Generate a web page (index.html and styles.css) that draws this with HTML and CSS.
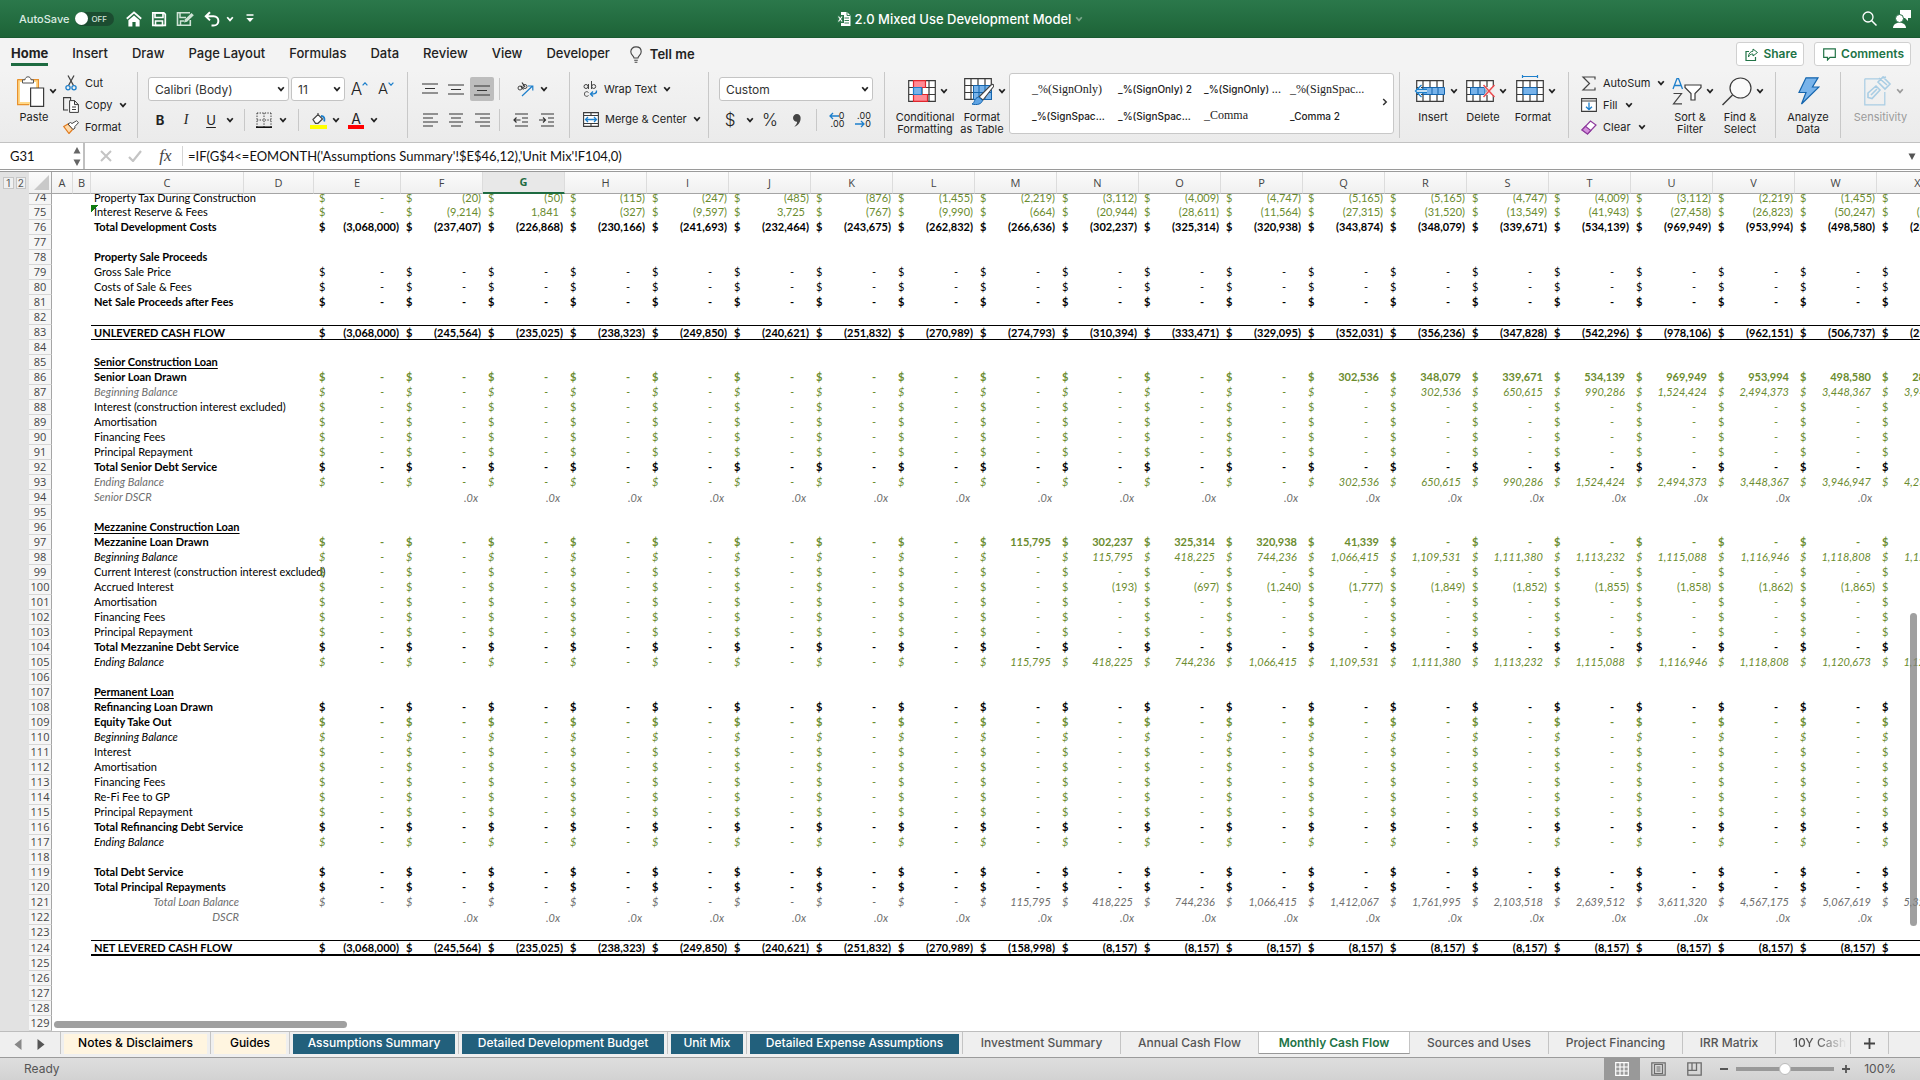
FILE: index.html
```html
<!DOCTYPE html>
<html lang="en">
<head>
<meta charset="utf-8">
<title>2.0 Mixed Use Development Model</title>
<link rel="stylesheet" href="styles.css">
</head>
<body>
<svg class="defs" width="0" height="0" aria-hidden="true">
  <symbol id="chev" viewBox="0 0 8 6"><path d="M1.2 1.2 4 4.4 6.8 1.2" fill="none" stroke="currentColor" stroke-width="1.7"/></symbol>
  <symbol id="grid9" viewBox="0 0 28 22"><path d="M.7.7h26.6v20.6H.7zM7 .7v20.6M14 .7v20.6M21 .7v20.6M.7 7.5h26.6M.7 14.5h26.6" fill="#fff" stroke="#3b3b3b" stroke-width="1.2"/></symbol>
</svg>

<header class="titlebar">
  <div class="quick">
    <label class="autosave">AutoSave <input type="checkbox" class="toggle"><span class="pill"><i></i>OFF</span></label>
    <button aria-label="Home"><svg width="16" height="16" viewBox="0 0 16 16"><path d="M.8 7.8 8 1.4l7.2 6.4" fill="none" stroke="#fff" stroke-width="1.9"/><path d="M2.4 9.2 8 4.4l5.6 4.8V15.500H9.600V11H6.400v4.500H2.400z" fill="#fff"/></svg></button>
    <button aria-label="Save"><svg width="16" height="16" viewBox="0 0 16 16"><path d="M1.800 1.800h11l1.500 1.500v11H1.800z" fill="none" stroke="#fff" stroke-width="1.700"/><path d="M4 2h8v4.500H4zM4.500 10h7v4.500h-7z" fill="none" stroke="#fff" stroke-width="1.600"/></svg></button>
    <button aria-label="Save as"><svg width="19" height="16" viewBox="0 0 19 16"><path d="M14 1.800H1.500v12.500h12.800V9" fill="none" stroke="#cfe3d6" stroke-width="1.600"/><path d="M4 2v4.500h6M4.500 14v-4H8" fill="none" stroke="#cfe3d6" stroke-width="1.500"/><path d="m8 11.500.8-3L15.500 2l2.300 2.200-6.700 6.500z" fill="#cfe3d6"/></svg></button>
    <button aria-label="Undo"><svg width="16" height="16" viewBox="0 0 16 16"><path d="M6 1.200 1.800 5.300 6 9.400M2 5.300h7.500c6.500 0 6.500 9.200 0 9.200H7.500" fill="none" stroke="#fff" stroke-width="2"/></svg></button>
    <button aria-label="Undo list" class="tight"><svg class="chev"><use href="#chev"/></svg></button>
    <button aria-label="Customise toolbar" class="last"><svg width="8" height="9" viewBox="0 0 8 9"><path d="M.5 1h7" stroke="#fff" stroke-width="1.500"/><path d="M.3 4h7.400L4 8z" fill="#fff"/></svg></button>
  </div>
  <h1 class="doc"><svg width="14" height="16" viewBox="0 0 14 16"><path d="M4 1h6l3.500 3.500V15H4z" fill="#fff"/><path d="M10 1v3.500h3.500M7.500 7H12M7.500 9.500H12M7.500 12H12" fill="none" stroke="#217346" stroke-width=".9"/><path d="M0 4h7v8H0z" fill="#2a7549"/><path d="m1.500 5.500 3.600 5M5.100 5.500l-3.600 5" stroke="#fff" stroke-width="1.200"/></svg><span>2.0 Mixed Use Development Model</span><svg class="chev dim"><use href="#chev"/></svg></h1>
  <div class="right">
    <button aria-label="Search"><svg width="15" height="15" viewBox="0 0 15 15"><circle cx="6" cy="6" r="5" fill="none" stroke="#fff" stroke-width="1.300"/><path d="m9.500 9.500 5 5" stroke="#fff" stroke-width="1.500"/></svg></button>
    <button aria-label="Account"><svg width="19" height="19" viewBox="0 0 19 19"><path d="M8 1h11v8h-3v3l-3-3H8z" fill="#fff"/><circle cx="7.500" cy="9.500" r="4" fill="#fff" stroke="#226d43"/><path d="M1 19c0-7 13-7 13 0z" fill="#fff"/></svg></button>
  </div>
</header>

<nav class="menu">
  <a class="on" href="#home">Home</a><a href="#insert">Insert</a><a href="#draw">Draw</a><a href="#layout">Page Layout</a><a href="#formulas">Formulas</a><a href="#data">Data</a><a href="#review">Review</a><a href="#view">View</a><a href="#developer">Developer</a>
  <button class="tell"><svg width="12" height="17" viewBox="0 0 12 17"><path d="M4 12c0-2-3.200-3-3.200-6.200C.8 2.800 3 .9 6 .9s5.200 1.900 5.200 4.900C11.200 9 8 10 8 12zM4.200 14.200h3.600M4.600 16.200h2.800" fill="none" stroke="#444" stroke-width="1.100"/></svg>Tell me</button>
  <div class="share">
    <button><svg width="13" height="13" viewBox="0 0 13 13"><path d="M4 3.500H1v9h9.500V9" fill="none" stroke="#217346" stroke-width="1.200"/><path d="M8 1l4.500 3.500L8 8V6C5.500 6 4.200 7 3.500 9c0-3.500 1.800-5.500 4.500-5.800z" fill="none" stroke="#217346"/></svg>Share</button>
    <button><svg width="13" height="13" viewBox="0 0 13 13"><path d="M.7.8h11.600v8.500H7L4.500 12V9.300H.7z" fill="none" stroke="#217346" stroke-width="1.200"/></svg>Comments</button>
  </div>
</nav>

<section class="ribbon" aria-label="Home commands">
  <div class="group clip">
    <button class="big paste"><span class="pic"><svg width="28" height="31" viewBox="0 0 28 31"><path d="M1.500 4.500h19v23h-19z" fill="#fff" stroke="#ffd98a" stroke-width="3"/><path d="M.6 3.600H8M14 3.600h7.400V12M.6 3.600v25H12" fill="none" stroke="#e8912d" stroke-width="1.200"/><path d="M5.500 7V3.800H8c.3-4 5.700-4 6 0h2.500V7z" fill="#fff" stroke="#555"/><path d="M13.600 12h13v18.300h-13z" fill="#fff" stroke="#3b3b3b" stroke-width="1.200"/></svg><svg class="chev"><use href="#chev"/></svg></span><span>Paste</span></button>
    <div class="stack">
      <button><svg width="16" height="16" viewBox="0 0 16 16"><path d="M5 .5l5.500 10M11 .5l-5.500 10" stroke="#444" stroke-width="1.300"/><circle cx="5" cy="12.800" r="2.100" fill="none" stroke="#1d7fcb" stroke-width="1.300"/><circle cx="11" cy="12.800" r="2.100" fill="none" stroke="#1d7fcb" stroke-width="1.300"/></svg>Cut</button>
      <button><svg width="16" height="16" viewBox="0 0 16 16"><path d="M5 13H.6V.6h7V3" fill="none" stroke="#3b3b3b" stroke-width="1.100"/><path d="M6.600 3.600h5l3.800 4v7.800H6.600zM11.500 3.600v4h4M9 10h4M9 12.500h4" fill="#fff" stroke="#3b3b3b"/></svg>Copy<svg class="chev"><use href="#chev"/></svg></button>
      <button><svg width="16" height="14" viewBox="0 0 16 14"><path d="M.8 6.500 5 4l5 5-4 4.500z" fill="#ffd9a8" stroke="#e07b1f" stroke-width="1.200"/><path d="m5 4 2.500-1.500 1.500 1L13.500.8l2 1.800-3.700 4L12 8l-2 1.500z" fill="#fff" stroke="#444"/></svg>Format</button>
    </div>
  </div>

  <div class="group font">
    <div class="fr1">
      <label class="combo"><select aria-label="Font"><option>Calibri (Body)</option></select><svg class="chev"><use href="#chev"/></svg></label>
      <label class="combo"><select aria-label="Font size"><option>11</option></select><svg class="chev"><use href="#chev"/></svg></label>
      <button class="grow" aria-label="Increase font size">A<svg width="6" height="4" viewBox="0 0 6 4"><path d="M.6 3.400 3 .8l2.400 2.600" fill="none" stroke="#1d7fcb" stroke-width="1.200"/></svg></button>
      <button class="grow small" aria-label="Decrease font size">A<svg width="6" height="4" viewBox="0 0 6 4"><path d="M.6.6 3 3.200 5.400.6" fill="none" stroke="#1d7fcb" stroke-width="1.200"/></svg></button>
    </div>
    <div class="fr2">
      <button class="bold">B</button><button class="ital">I</button><button class="und">U</button><button aria-label="Underline styles"><svg class="chev"><use href="#chev"/></svg></button><i class="sep"></i>
      <button aria-label="Borders"><svg width="16" height="16" viewBox="0 0 16 16"><path d="M1 1h14M1 1v14M15 1v14M8 1v14M1 8h14" fill="none" stroke="#333" stroke-dasharray="1.300 1.300"/><path d="M0 15.200h16" stroke="#111" stroke-width="1.600"/></svg></button><button aria-label="Border styles"><svg class="chev"><use href="#chev"/></svg></button><i class="sep"></i>
      <button aria-label="Fill colour"><svg width="17" height="17" viewBox="0 0 17 17"><path d="M0 13h17v4H0z" fill="#ff0"/><path d="m3 7.500 5-5L12.500 7 8 11.300H5.500zM8 4V1" fill="#fff" stroke="#444" stroke-width="1.200"/><path d="M11 4c3 0 4 2 3.200 5.500" fill="none" stroke="#1d7fcb" stroke-width="1.800"/></svg></button><button aria-label="Fill colours"><svg class="chev"><use href="#chev"/></svg></button>
      <button class="fcol" aria-label="Font colour">A</button><button aria-label="Font colours"><svg class="chev"><use href="#chev"/></svg></button>
    </div>
  </div>

  <div class="group align">
    <button aria-label="Top align"><svg width="16" height="13" viewBox="0 0 16 13"><path d="M0 1h16M3 5.500h10M0 10h16"/></svg></button>
    <button aria-label="Middle align"><svg width="16" height="13" viewBox="0 0 16 13"><path d="M0 2h16M3 6.500h10M0 11h16"/></svg></button>
    <button class="pressed" aria-label="Bottom align"><svg width="16" height="13" viewBox="0 0 16 13"><path d="M0 3h16M3 7.500h10M0 12h16"/></svg></button>
    <i class="sep"></i>
    <button class="wide" aria-label="Orientation"><svg width="17" height="15" viewBox="0 0 17 15"><g fill="none" stroke="#444"><circle cx="3" cy="6" r="2"/><path d="m3.800 3.800 2.700 3.700"/><circle cx="8" cy="4.500" r="2"/><path d="m5 .5 3 4.500"/></g><path d="M5 14 15.500 4M11 4h4.800v4.500" fill="none" stroke="#1d7fcb" stroke-width="1.200"/></svg><svg class="chev"><use href="#chev"/></svg></button>
    <button aria-label="Align left"><svg width="16" height="14" viewBox="0 0 16 14"><path d="M1 1h15M1 5h10M1 9h15M1 13h10"/></svg></button>
    <button aria-label="Centre"><svg width="16" height="14" viewBox="0 0 16 14"><path d="M1 1h14M3 5h10M1 9h14M3 13h10"/></svg></button>
    <button aria-label="Align right"><svg width="16" height="14" viewBox="0 0 16 14"><path d="M1 1h15M6 5h10M1 9h15M6 13h10"/></svg></button>
    <i class="sep"></i>
    <span class="indent"><button aria-label="Decrease indent"><svg width="16" height="14" viewBox="0 0 16 14"><path d="M2 1h13M9 5h6M9 9h6M2 13h13"/><path class="bl" d="M7.500 7H1M3.500 4.500 1 7l2.500 2.500"/></svg></button>
    <button aria-label="Increase indent"><svg width="16" height="14" viewBox="0 0 16 14"><path d="M2 1h13M9 5h6M9 9h6M2 13h13"/><path class="bl" d="M0 7h6.500M4 4.500 6.500 7 4 9.500"/></svg></button></span>
  </div>

  <div class="group wrap">
    <button><svg width="15" height="17" viewBox="0 0 15 17"><g fill="none" stroke="#444"><circle cx="3" cy="5.500" r="2"/><path d="M5.500 3v5M8.500 0v8M5.500 11.500c-1.500-1.500-4-1-4 1.500s2.500 3 4 1.500"/><circle cx="10.700" cy="5.500" r="2"/></g><path d="M13.500 9.500c.5 3-2 3.500-5.500 3.500M10 10.500 7.500 13l2.500 2.500" fill="none" stroke="#1d7fcb" stroke-width="1.400"/></svg>Wrap Text<svg class="chev"><use href="#chev"/></svg></button>
    <button><svg width="16" height="15" viewBox="0 0 16 15"><path d="M.6.600h14.800v13.800H.6zM.6 3.500h14.800M.6 11.500h14.800M8 .6v3M8 11.500v3" fill="#fff" stroke="#3b3b3b" stroke-width="1.100"/><path d="M2.500 7.500h11M5 5 2.500 7.500 5 10M11 5l2.500 2.500L11 10" fill="none" stroke="#1d7fcb" stroke-width="1.300"/></svg>Merge &amp; Center<svg class="chev"><use href="#chev"/></svg></button>
  </div>

  <div class="group number">
    <label class="combo"><select aria-label="Number format"><option>Custom</option></select><svg class="chev"><use href="#chev"/></svg></label>
    <div class="nr2">
      <button class="sym">$</button><button aria-label="Currencies"><svg class="chev"><use href="#chev"/></svg></button><button class="sym">%</button><button aria-label="Comma style"><svg width="8" height="13" viewBox="0 0 8 13"><path d="M7.600 4.200c0 4-2.200 7-6.400 8.600 2-2 3-3.600 2.900-5.100A3.800 3.800 0 1 1 7.600 4.200z" fill="#444"/></svg></button><i class="sep"></i>
      <button class="dec"><span><svg width="10" height="8" viewBox="0 0 10 8"><path d="M10 4H1M4 1 1 4l3 3"/></svg>0</span><span>.00</span></button>
      <button class="dec"><span>.00</span><span><svg width="10" height="8" viewBox="0 0 10 8"><path d="M0 4h9M6 1l3 3-3 3"/></svg>0</span></button>
    </div>
  </div>

  <div class="group styles">
    <button class="big cond"><span class="pic"><svg width="28" height="22" viewBox="0 0 28 22"><use href="#grid9" width="28" height="22"/><path d="M5.500.7h12v6.800h-12zM5.500 14.500h14v6.800h-14z" fill="#ff8a94" stroke="#e0262d" stroke-width="1.200"/><path d="M5.500 7.500h8v7h-8z" fill="#78b3ea" stroke="#1d7fcb" stroke-width="1.200"/></svg><svg class="chev"><use href="#chev"/></svg></span><span>Conditional<br>Formatting</span></button>
    <button class="big"><span class="pic"><svg width="30" height="27" viewBox="0 0 30 27"><use href="#grid9" width="28" height="22"/><path d="M9.500 7.500h18v14h-18z" fill="#78b3ea" stroke="#1565ad"/><path d="M15 7.500v14M21 7.500v14M9.500 14.500h18" stroke="#1565ad"/><path d="m15 19 12-12c2-1.500 3.500.2 2.200 2L19 22z" fill="#fff" stroke="#444" stroke-width="1.100"/><path d="M8 26c3-1 2-6 6.500-7l4 3.200C18 26 13 27.500 8 26z" fill="#5fa4e4" stroke="#1565ad"/></svg><svg class="chev"><use href="#chev"/></svg></span><span>Format<br>as Table</span></button>
    <div class="gallery">
      <button class="ser">_%(SignOnly)</button><button>_%(SignOnly) 2</button><button>_%(SignOnly) ...</button><button class="ser">_%(SignSpac...</button>
      <button>_%(SignSpac...</button><button>_%(SignSpac...</button><button class="ser">_Comma</button><button>_Comma 2</button>
      <button class="more" aria-label="More styles"><svg width="6" height="8" viewBox="0 0 6 8"><path d="m1.200 1 3 3-3 3" fill="none" stroke="#333" stroke-width="1.500"/></svg></button>
    </div>
  </div>

  <div class="group cells">
    <button class="big"><span class="pic"><svg width="32" height="24" viewBox="0 0 32 24"><use href="#grid9" x="2" y="1" width="28" height="22"/><path d="M9 8.500h21.500v7H9z" fill="#78b3ea" stroke="#1565ad"/><path d="M18 8.500v7M24 8.500v7" stroke="#1565ad"/><path d="M7 6v4h6v4H7v4L1 12z" fill="#fff"/><path d="M13 10.500H2M13 13.500H2M7.500 6 1.500 12l6 6" fill="none" stroke="#1d7fcb" stroke-width="1.300"/></svg><svg class="chev"><use href="#chev"/></svg></span><span>Insert</span></button>
    <button class="big"><span class="pic"><svg width="30" height="24" viewBox="0 0 30 24"><use href="#grid9" x="1" y="1" width="28" height="22"/><path d="M5.500 8.500H20v7H5.500z" fill="#78b3ea" stroke="#1565ad"/><path d="M13 8.500v7" stroke="#1565ad"/><path d="M19 8h11v8H19l3-4z" fill="#efefef"/><path d="m18.500 6 11 12M29.500 6l-11 12" stroke="#ee4b4f" stroke-width="1.500"/></svg><svg class="chev"><use href="#chev"/></svg></span><span>Delete</span></button>
    <button class="big"><span class="pic"><svg width="28" height="32" viewBox="0 0 28 32"><use href="#grid9" y="5" width="28" height="22"/><path d="M7 12.500h14v7H7z" fill="#78b3ea" stroke="#1565ad"/><path d="M7 1.500h14M6.500 0v3M21.500 0v3" stroke="#1d7fcb" stroke-width="1.200"/></svg><svg class="chev"><use href="#chev"/></svg></span><span>Format</span></button>
  </div>

  <div class="group edit">
    <div class="stack">
      <button><svg width="16" height="15" viewBox="0 0 16 15"><path d="M14 3.500V1H2l6.500 6.500L2 14h12v-2.500" fill="none" stroke="#444" stroke-width="1.200"/></svg>AutoSum<svg class="chev"><use href="#chev"/></svg></button>
      <button><svg width="16" height="14" viewBox="0 0 16 14"><path d="M.6.600h14.800v12.800H.6zM.6 3h14.800" fill="#fff" stroke="#3b3b3b" stroke-width="1.100"/><path d="M8 4.500v7M5 8.700l3 2.800 3-2.800" fill="none" stroke="#1d7fcb" stroke-width="1.300"/></svg>Fill<svg class="chev"><use href="#chev"/></svg></button>
      <button><svg width="16" height="15" viewBox="0 0 16 15"><path d="m1 10 8.500-9 5.500 4L6.500 14z" fill="#fff" stroke="#8e3a9d" stroke-width="1.200"/><path d="m1 10 3.500-3.600L9.800 10.500 6.500 14z" fill="#d491dd" stroke="#8e3a9d" stroke-width="1.200"/></svg>Clear<svg class="chev"><use href="#chev"/></svg></button>
    </div>
    <button class="big"><span class="pic"><svg width="30" height="27" viewBox="0 0 30 27"><path d="m1 11 4-10.500h1.500L10.500 11M2.500 7.500H9" fill="none" stroke="#1d7fcb" stroke-width="1.300"/><path d="M1.500 15.500h8l-8 10.300h8.500" fill="none" stroke="#444" stroke-width="1.200"/><path d="M13 7h16v2.500l-6 6V22h-4v-6.500l-6-6z" fill="#fff" stroke="#3b3b3b" stroke-width="1.200"/></svg><svg class="chev"><use href="#chev"/></svg></span><span>Sort &amp;<br>Filter</span></button>
    <button class="big"><span class="pic"><svg width="30" height="29" viewBox="0 0 30 29"><ellipse cx="18.500" cy="11" rx="10.500" ry="10" fill="#fafafa" stroke="#3b3b3b" stroke-width="1.200"/><path d="M10.500 18 .5 28" stroke="#3b3b3b" stroke-width="1.400"/></svg><svg class="chev"><use href="#chev"/></svg></span><span>Find &amp;<br>Select</span></button>
  </div>

  <div class="group one">
    <button class="big"><span class="pic"><svg width="22" height="28" viewBox="0 0 22 28"><path d="M8 .8h12L14.500 10H21L3.500 27l4.500-11.500H1z" fill="#78b3ea" stroke="#1565ad" stroke-width="1.200"/></svg></span><span>Analyze<br>Data</span></button>
  </div>
  <div class="group one off">
    <button class="big" disabled><span class="pic"><svg width="28" height="30" viewBox="0 0 28 30"><path d="M.8 2.800h17M.8 2.800v26h20V16" fill="none" stroke="#a9cde4" stroke-width="1.200"/><path d="m4 17 8-7 4 4-8 8.500-4-1zM7 19l6-6M14 6l5-5 7 7-5 5zM18 2l4-1M23 9l-8-7" fill="none" stroke="#a9cde4" stroke-width="1.600"/></svg><svg class="chev"><use href="#chev"/></svg></span><span>Sensitivity</span></button>
  </div>
</section>

<section class="fbar">
  <input class="name" aria-label="Name box" value="G31">
  <div class="spin"><button aria-label="Previous name"><svg width="8" height="7" viewBox="0 0 8 7"><path d="M4 0l3.500 6.500h-7z" fill="#666"/></svg></button><button aria-label="Next name"><svg width="8" height="7" viewBox="0 0 8 7"><path d="M4 7 .5.500h7z" fill="#666"/></svg></button></div>
  <button aria-label="Cancel"><svg width="12" height="12" viewBox="0 0 12 12"><path d="m1 1 10 10M11 1 1 11" stroke="#c4c4c4" stroke-width="2"/></svg></button>
  <button aria-label="Enter"><svg width="14" height="12" viewBox="0 0 14 12"><path d="m1 7 4 4 8-10" fill="none" stroke="#c4c4c4" stroke-width="2.200"/></svg></button>
  <button class="fx">fx</button>
  <input class="formula" aria-label="Formula" value="=IF(G$4&lt;=EOMONTH('Assumptions Summary'!$E$46,12),'Unit Mix'!F104,0)">
  <button aria-label="Expand formula bar"><svg width="8" height="7" viewBox="0 0 8 7"><path d="M4 7 .5.500h7z" fill="#555"/></svg></button>
</section>

<main class="sheet">
  <div class="outline"><button>1</button><button>2</button></div>
  <div class="viewport"><table id="cells"></table></div>
  <div class="vscroll"></div>
  <div class="hscroll"></div>
</main>

<nav class="tabs" aria-label="Sheets">
  <span class="arrows"><button aria-label="Scroll tabs left"><svg width="8" height="11" viewBox="0 0 8 11"><path d="M7.500 0v11L.5 5.500z" fill="#888"/></svg></button><button aria-label="Scroll tabs right"><svg width="8" height="11" viewBox="0 0 8 11"><path d="M.5 0v11l7-5.500z" fill="#555"/></svg></button></span>
  <a href="#s1" class="cream"><span>Notes &amp; Disclaimers</span></a><a href="#s2" class="cream"><span>Guides</span></a><a href="#s3" class="teal"><span>Assumptions Summary</span></a><a href="#s4" class="teal"><span>Detailed Development Budget</span></a><a href="#s5" class="teal"><span>Unit Mix</span></a><a href="#s6" class="teal"><span>Detailed Expense Assumptions</span></a><a href="#s7">Investment Summary</a><a href="#s8">Annual Cash Flow</a><a href="#s9" class="current">Monthly Cash Flow</a><a href="#s10">Sources and Uses</a><a href="#s11">Project Financing</a><a href="#s12">IRR Matrix</a><a href="#s13" class="cut">10Y Cash</a>
  <button class="add" aria-label="Add sheet"><svg width="11" height="11" viewBox="0 0 11 11"><path d="M5.500 0v11M0 5.500h11" stroke="#444" stroke-width="1.800"/></svg></button>
</nav>

<footer class="status">
  <span>Ready</span>
  <div class="views">
    <button class="on" aria-label="Normal view"><svg width="14" height="14" viewBox="0 0 14 14"><path d="M.7.7h12.600v12.600H.7zM5 .7v12.600M9 .7v12.600M.7 5h12.600M.7 9h12.600" fill="none" stroke="#fff" stroke-width="1.200"/></svg></button>
    <button aria-label="Page layout view"><svg width="15" height="14" viewBox="0 0 15 14"><path d="M.8.800h13.400v12.400H.8zM3.500 2.500h8v9h-8zM5.500 5h4M5.500 7h4M5.500 9h4" fill="none" stroke="#6b6b6b" stroke-width="1.200"/></svg></button>
    <button aria-label="Page break view"><svg width="15" height="14" viewBox="0 0 15 14"><path d="M.8.800h13.400v12.400H.8zM5 .8v7.500M9.500.8v7.500H1M5 8.300h4.500" fill="none" stroke="#6b6b6b" stroke-width="1.300"/></svg></button>
  </div>
  <button class="zb" aria-label="Zoom out"><svg width="8" height="8" viewBox="0 0 8 8"><path d="M0 4h8" stroke="#555" stroke-width="2"/></svg></button>
  <input type="range" aria-label="Zoom" min="0" max="100" value="50">
  <button class="zb" aria-label="Zoom in"><svg width="8" height="8" viewBox="0 0 8 8"><path d="M0 4h8M4 0v8" stroke="#555" stroke-width="1.800"/></svg></button>
  <span class="pct">100%</span>
</footer>
<script src="sheet.js"></script>
</body>
</html>
```
FILE: styles.css
```css
* { box-sizing: border-box; }
body { margin: 0; height: 100vh; display: flex; flex-direction: column; overflow: hidden; font: 11px/12px Inter, "Liberation Sans", sans-serif; color: #222; background: #fff; }
button { font: inherit; color: inherit; border: 0; background: none; padding: 0; margin: 0; display: flex; align-items: center; justify-content: center; white-space: nowrap; }
a { color: inherit; text-decoration: none; white-space: nowrap; }
svg { flex: none; display: block; }
.defs { position: absolute; }
.chev { width: 8px; height: 6px; }

/* title bar */
.titlebar { flex: none; height: 38px; display: grid; grid-template-columns: 1fr auto 1fr; align-items: center; background: linear-gradient(#2b784b, #1d6337); border-bottom: 1px solid #195a31; color: #fff; }
.quick { display: flex; align-items: center; gap: 9px; padding-left: 19px; }
.quick .tight { margin-left: -3px; }
.quick .last { margin-left: 3px; }
.autosave { display: flex; align-items: center; gap: 6px; font-weight: 500; color: #dcebe1; margin-right: 3px; }
.toggle { position: absolute; opacity: 0; }
.pill { display: flex; align-items: center; gap: 3px; width: 39px; height: 14px; border-radius: 7px; background: #1b4c30; font-size: 8px; color: #d5e4da; }
.pill i { width: 13px; height: 13px; border-radius: 50%; background: #fff; }
.doc { margin: 0; font-size: 13px; font-weight: 500; display: flex; align-items: center; gap: 4px; }
.dim { opacity: .4; }
.right { display: flex; justify-content: flex-end; gap: 15px; padding-right: 9px; }

/* menu tabs */
.menu { flex: none; height: 32px; display: flex; align-items: flex-start; gap: 24px; padding: 4px 9px 0 11px; background: #f3f3f3; font-size: 13px; font-weight: 500; }
.menu > a { height: 24px; line-height: 23px; }
.menu > .on { font-weight: 700; border-bottom: 3px solid #1e6b41; }
.tell { height: 24px; gap: 8px; font-weight: 600; margin-left: -4px; }
.share { margin-left: auto; display: flex; gap: 10px; }
.share button { height: 24px; padding: 0 6px 0 8px; gap: 5px; background: #fff; border: 1px solid #d0d0d0; border-radius: 3px; color: #217346; font-size: 12px; font-weight: 600; }

/* ribbon */
.ribbon { flex: none; height: 73px; padding: 2px 0 8px; display: grid; grid-template-columns: 138px 270px 162px 139px 176px 1fr 169px 207px 65px 79px; background: linear-gradient(#f3f3f3, #ebebeb); border-bottom: 1px solid #c2c2c2; }
.group { display: flex; border-right: 1px solid #c8c8c8; min-width: 0; }
.group:last-child { border-right: 0; }
.big { flex: none; width: 50px; flex-direction: column; justify-content: flex-start; }
.pic { height: 38px; display: flex; align-items: center; justify-content: center; gap: 4px; padding-left: 2px; margin-bottom: 1px; }
.pic .chev { margin-right: -4px; }
.stack { display: grid; grid-template-rows: repeat(3, 22px); align-items: center; justify-items: start; }
.stack button { gap: 6px; }
.stack .chev { margin-left: 1px; }
.paste { width: 54px; margin-left: 7px; }
.clip .stack { margin-left: 2px; }
.sep { width: 1px; height: 22px; background: #c8c8c8; }
.combo { position: relative; display: block; height: 24px; }
.combo select { appearance: none; width: 100%; height: 24px; padding: 0 6px; border: 1px solid #c4c4c4; border-radius: 3px; background: #fff; font: 12px Inter, sans-serif; color: #333; }
.combo .chev { position: absolute; right: 4px; top: 9px; }
.font { flex-direction: column; gap: 6px; padding: 5px 0 0 10px; }
.fr1 { display: grid; grid-template-columns: 141px 54px 25px 24px; column-gap: 2px; }
.fr2 { display: grid; grid-template-columns: 24px 28px 22px 16px 12px 28px 10px 20px 20px 16px 24px 12px; height: 26px; place-items: center; font-size: 13px; }
.grow { align-items: flex-start; font-size: 17px; line-height: 24px; font-weight: 300; }
.grow svg { margin-top: 5px; }
.grow.small { font-size: 15px; }
.bold { font-weight: 700; }
.ital { font-family: "Liberation Serif", serif; font-style: italic; font-size: 14px; }
.und { text-decoration: underline; text-underline-offset: 2px; }
.fcol { width: 16px; height: 18px; border-bottom: 4px solid #f00; line-height: 13px; font-size: 14px; }
.align { display: grid; grid-template-columns: 24px 24px 24px 1px 1fr; grid-template-rows: 24px 26px; gap: 6px 2px; padding: 5px 0 0 10px; align-items: center; }
.align svg:not(.chev) path { stroke: #333; stroke-width: 1.2; fill: none; }
.align svg .bl, .align .wide svg:not(.chev) > path { stroke: #1d7fcb; }
.align .sep { margin-left: 3px; }
.pressed { height: 24px; background: #bdbdbd; border-radius: 2px; }
.wide { gap: 6px; justify-content: flex-start; padding-left: 18px; }
.indent { display: flex; gap: 10px; justify-content: center; }
.wrap { flex-direction: column; gap: 6px; padding: 5px 0 0 13px; align-items: flex-start; }
.wrap button { height: 24px; gap: 6px; }
.number { flex-direction: column; gap: 6px; padding: 5px 11px 0 10px; }
.nr2 { display: grid; grid-template-columns: 22px 17px 24px 30px 8px 33px 20px; height: 26px; place-items: center; }
.sym { font-size: 17px; font-weight: 300; }
.dec { flex-direction: column; align-items: flex-end; font-size: 9px; line-height: 8px; }
.dec span { display: flex; justify-content: flex-end; }
.dec path { fill: none; stroke: #1d7fcb; stroke-width: 1.3; }
.styles { padding: 0 10px 0 8px; }
.cond { width: 64px; }
.gallery { flex: 1; position: relative; margin: 1px 0 4px 2px; padding: 2px 17px 4px 22px; display: grid; grid-template-columns: repeat(4, 86px); grid-template-rows: 1fr 1fr; background: #fff; border: 1px solid #c8c8c8; border-radius: 3px; justify-items: start; align-items: center; font-weight: 500; font-size: 10px; }
.gallery .ser { font: 12px "Liberation Serif", serif; }
.gallery .more { position: absolute; right: 5px; top: 24px; }
.cells { padding-left: 8px; }
.edit { padding-left: 12px; }
.edit .stack { width: 84px; }
.one { justify-content: center; }
.one .big { width: 60px; }
.off { color: #9b9b9b; }

/* formula bar */
.fbar { flex: none; height: 29px; display: flex; align-items: center; background: #fff; border-bottom: 3px double #9a9a9a; }
.fbar input { border: 0; outline: 0; padding: 0; background: none; font: 13px Lato, sans-serif; color: #111; }
.fbar .name { width: 70px; padding-left: 10px; }
.spin { align-self: stretch; width: 15px; border-right: 2px solid #c0c0c0; display: flex; flex-direction: column; justify-content: center; gap: 5px; }
.fbar > button { width: 29px; }
.fbar .fx { width: 34px; border-right: 1px solid #d5d5d5; font: italic 17px/20px "Liberation Serif", serif; color: #444; }
.fbar > button:nth-of-type(1) { margin-left: 6px; }
.fbar > .formula { flex: 1; padding-left: 5px; }
.fbar > button:last-child { width: 17px; }

/* sheet */
.sheet { flex: 1; min-height: 0; position: relative; display: flex; background: #fff; }
.outline { flex: none; width: 29px; display: flex; align-items: flex-start; gap: 2px; padding: 5px 3px; background: #e2e2e2; }
.outline button { width: 11px; height: 12px; border: 1px solid #c6c6c6; background: #f0f0f0; font-size: 10px; color: #555; }
.viewport { flex: 1; min-width: 0; overflow: hidden; }
table { table-layout: fixed; width: 0; border-collapse: separate; border-spacing: 0; font: 11px/14px Lato, sans-serif; color: #000; }
td, th { padding: 0; height: 15px; white-space: nowrap; font-weight: 400; text-align: left; }
thead th { height: 22px; text-align: center; font: 11px/20px "Open Sans", sans-serif; color: #444; background: linear-gradient(#fbfbfb, #f0f0f0); border-right: 1px solid #dcdcdc; border-bottom: 1px solid #a5a5a5; }
thead .sel { background: #e8e8e8; color: #1e6b41; font-weight: 700; border-bottom: 2px solid #1e6b41; }
.corner svg { margin-left: 5px; }
tbody th { text-align: center; font: 11px/14px "Open Sans", sans-serif; color: #444; background: #f6f6f6; border-bottom: 1px solid #d6d6d6; }
thead .corner, tbody th { border-right: 1px solid #a5a5a5; }
.acct, .lab { display: flex; justify-content: space-between; height: 15px; }
.acct { padding-left: 5px; }
.lab { padding-left: 3px; }
.neg { padding-right: 2px; }
.pos { padding-right: 6px; }
.dash { padding-right: 17px; }
.ratio { text-align: right; padding-right: 5px; }
.part td, .part th { height: 11px; }
.part .acct, .part .lab { height: 11px; align-items: flex-end; overflow-x: visible; overflow-y: clip; }
.part th div { height: 10px; display: flex; align-items: flex-end; justify-content: center; overflow-x: visible; overflow-y: clip; }
.b td { font-weight: 700; }
.i td { font-style: italic; }
.u span { text-decoration: underline; text-underline-offset: 2px; }
.green td:not(.lcell) { color: #6b8c2f; }
.gray td, .graylab .lcell { color: #6e6e6e; }
.gray td:not(.lcell) { color: #6e6e6e; }
.r .lab { justify-content: flex-end; padding-right: 5px; }
.flag { background: linear-gradient(135deg, #107c10 5px, transparent 5px); }
.box td.ln { border-top: 1px solid #000; border-bottom: 1px solid #000; }
.box td.ln .acct, .box td.ln .lab { height: 13px; line-height: 13px; }
.end td.ln { border-bottom-width: 2px; }
.vscroll { position: absolute; right: 3px; bottom: 105px; width: 7px; height: 313px; border-radius: 4px; background: rgba(128, 128, 128, .75); }
.hscroll { position: absolute; left: 54px; bottom: 3px; width: 293px; height: 7px; border-radius: 4px; background: #a0a0a0; }

/* sheet tabs */
.tabs { flex: none; height: 27px; display: grid; grid-template-columns: 61px 150px 79px 169px 209px 79px 216px 158px 138px 151px 139px 134px 93px 75px 38px; background: #efefef; border-top: 1px solid #bdbdbd; border-bottom: 1px solid #9b9b9b; font-size: 12px; font-weight: 500; color: #555; }
.tabs > * { border-right: 1px solid #c4c4c4; height: 22px; line-height: 21px; text-align: center; }
.arrows { display: flex; gap: 15px; padding: 3px 0 0 14px; }
.tabs a span { display: block; margin: 2px 3px 0; height: 20px; line-height: 17px; }
.cream span { background: #fff5e0; color: #000; }
.teal span { background: #22607c; color: #fff; }
.tabs .current { background: #fff; color: #217346; font-weight: 600; border-bottom: 1px solid #999; }
.tabs .cut { padding-left: 17px; text-align: left; color: transparent; background: linear-gradient(90deg, #555 55%, #efefef 96%); background-clip: text; }

/* status bar */
.status { flex: none; height: 22px; display: flex; align-items: center; padding: 0 24px; background: linear-gradient(#dedede, #d2d2d2); font-size: 12px; color: #555; }
.views { margin-left: auto; align-self: stretch; display: flex; }
.views button { width: 36px; }
.views .on { background: #999; }
.zb { width: 24px; }
.status input { appearance: none; width: 98px; height: 14px; margin: 0; background: linear-gradient(#999, #999) center / 100% 4px no-repeat; border-radius: 2px; }
.status input::-webkit-slider-thumb { appearance: none; width: 12px; height: 12px; border-radius: 50%; background: #fff; border: 1px solid #bbb; }
.pct { width: 38px; text-align: right; }
```
FILE: sheet.js
```js
// Column letters and widths; the row-number column comes first.
const cols = [['', 23], ['A', 21], ['B', 18], ['C', 153], ['D', 70], ['E', 87]];
for (const c of 'FGHIJKLMNOPQRSTUVWX') cols.push([c, 82]);

// Each row: number, label, style classes, figures. Figures are right-filled
// to column X; the columns before them hold a zero, shown as a dash.
const rows = [
  [74, 'Property Tax During Construction', 'green part', '- (20) (50) (115) (247) (485) (876) (1,455) (2,219) (3,112) (4,009) (4,747) (5,165) (5,165) (4,747) (4,009) (3,112) (2,219) (1,455) (876)'],
  [75, 'Interest Reserve & Fees', 'green', '(9,214) 1,841 (327) (9,597) 3,725 (767) (9,990) (664) (20,944) (28,611) (11,564) (27,315) (31,520) (13,549) (41,943) (27,458) (26,823) (50,247) (24,315)'],
  [76, 'Total Development Costs', 'b', '(3,068,000) (237,407) (226,868) (230,166) (241,693) (232,464) (243,675) (262,832) (266,636) (302,237) (325,314) (320,938) (343,874) (348,079) (339,671) (534,139) (969,949) (953,994) (498,580) (289,353)'],
  [77], [78, 'Property Sale Proceeds', 'b'],
  [79, 'Gross Sale Price', '', '-'],
  [80, 'Costs of Sale & Fees', '', '-'],
  [81, 'Net Sale Proceeds after Fees', 'b', '-'],
  [82],
  [83, 'UNLEVERED CASH FLOW', 'b box', '(3,068,000) (245,564) (235,025) (238,323) (249,850) (240,621) (251,832) (270,989) (274,793) (310,394) (333,471) (329,095) (352,031) (356,236) (347,828) (542,296) (978,106) (962,151) (506,737) (297,510)'],
  [84], [85, 'Senior Construction Loan', 'b u'],
  [86, 'Senior Loan Drawn', 'b green', '302,536 348,079 339,671 534,139 969,949 953,994 498,580 289,353'],
  [87, 'Beginning Balance', 'i green graylab', '302,536 650,615 990,286 1,524,424 2,494,373 3,448,367 3,946,947'],
  [88, 'Interest (construction interest excluded)', 'green', '-'],
  [89, 'Amortisation', 'green', '-'],
  [90, 'Financing Fees', 'green', '-'],
  [91, 'Principal Repayment', 'green', '-'],
  [92, 'Total Senior Debt Service', 'b', '-'],
  [93, 'Ending Balance', 'i green graylab', '302,536 650,615 990,286 1,524,424 2,494,373 3,448,367 3,946,947 4,236,300'],
  [94, 'Senior DSCR', 'i gray', 'x'],
  [95], [96, 'Mezzanine Construction Loan', 'b u'],
  [97, 'Mezzanine Loan Drawn', 'b green', '115,795 302,237 325,314 320,938 41,339 - - - - - - -'],
  [98, 'Beginning Balance', 'i green', '115,795 418,225 744,236 1,066,415 1,109,531 1,111,380 1,113,232 1,115,088 1,116,946 1,118,808 1,120,673'],
  [99, 'Current Interest (construction interest excluded)', 'green', '-'],
  [100, 'Accrued Interest', 'green', '(193) (697) (1,240) (1,777) (1,849) (1,852) (1,855) (1,858) (1,862) (1,865) (1,868)'],
  [101, 'Amortisation', 'green', '-'],
  [102, 'Financing Fees', 'green', '-'],
  [103, 'Principal Repayment', 'green', '-'],
  [104, 'Total Mezzanine Debt Service', 'b', '-'],
  [105, 'Ending Balance', 'i green', '115,795 418,225 744,236 1,066,415 1,109,531 1,111,380 1,113,232 1,115,088 1,116,946 1,118,808 1,120,673 1,122,541'],
  [106], [107, 'Permanent Loan', 'b u'],
  [108, 'Refinancing Loan Drawn', 'b', '-'],
  [109, 'Equity Take Out', 'b green', '-'],
  [110, 'Beginning Balance', 'i green', '-'],
  [111, 'Interest', 'green', '-'],
  [112, 'Amortisation', 'green', '-'],
  [113, 'Financing Fees', 'green', '-'],
  [114, 'Re-Fi Fee to GP', 'green', '-'],
  [115, 'Principal Repayment', 'green', '-'],
  [116, 'Total Refinancing Debt Service', 'b', '-'],
  [117, 'Ending Balance', 'i green', '-'],
  [118],
  [119, 'Total Debt Service', 'b', '-'],
  [120, 'Total Principal Repayments', 'b', '-'],
  [121, 'Total Loan Balance', 'i gray r', '115,795 418,225 744,236 1,066,415 1,412,067 1,761,995 2,103,518 2,639,512 3,611,320 4,567,175 5,067,619 5,358,841'],
  [122, 'DSCR', 'i gray r', 'x'],
  [123],
  [124, 'NET LEVERED CASH FLOW', 'b box end', '(3,068,000) (245,564) (235,025) (238,323) (249,850) (240,621) (251,832) (270,989) (158,998)' + ' (8,157)'.repeat(11)],
  [125], [126], [127], [128], [129]
];

const COUNT = 20; // columns E to X
const kind = v => v === '-' ? 'dash' : v[0] === '(' ? 'neg' : 'pos';

function figures(text) {
  if (!text) return '<td></td>'.repeat(COUNT);
  if (text === 'x') return '<td></td>' + '<td><div class="ratio">.0x</div></td>'.repeat(COUNT - 1);
  const list = text.split(' ');
  while (list.length < COUNT) list.unshift('-');
  return list.map(v => `<td class="ln"><div class="acct"><span>$</span><span class="${kind(v)}">${v}</span></div></td>`).join('');
}

const colgroup = cols.map(([, w]) => `<col style="width:${w}px">`).join('');
const corner = '<th class="corner"><svg width="15" height="15" viewBox="0 0 15 15"><path d="M15 0v15H0z" fill="#c9c9c9"/></svg></th>';
const head = corner + cols.slice(1).map(([c]) => `<th${c === 'G' ? ' class="sel"' : ''}>${c}</th>`).join('');
const body = rows.map(([n, label = '', cls = '', text]) =>
  `<tr class="${cls}"><th><div>${n}</div></th><td></td><td></td>` +
  `<td class="lcell ln${n === 75 ? ' flag' : ''}"><div class="lab"><span>${label.replace('&', '&amp;')}</span></div></td><td class="ln"></td>${figures(text)}</tr>`).join('');

document.getElementById('cells').innerHTML = `<colgroup>${colgroup}</colgroup><thead><tr>${head}</tr></thead><tbody>${body}</tbody>`;
```
